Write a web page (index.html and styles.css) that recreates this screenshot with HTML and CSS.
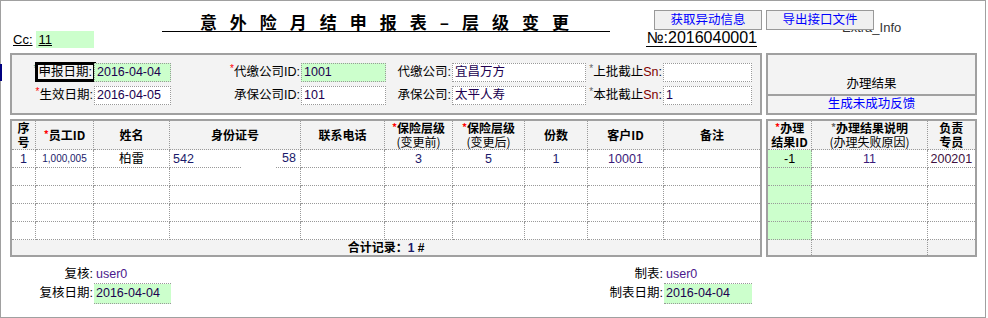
FILE: index.html
```html
<!DOCTYPE html>
<html lang="zh-CN">
<head>
    <meta charset="UTF-8">
    <title>意外险月结申报表 - 层级变更</title>
    <link rel="stylesheet" href="styles.css">
</head>
<body>
<div class="page">
    <div class="head">
        <div class="title">意外险月结申报表–层级变更</div>
        <div class="actions">
            <button class="btn">获取异动信息</button>
            <button class="btn">导出接口文件</button>
            <span class="extra">Extra_Info</span>
        </div>
    </div>

    <div class="sub">
        <span class="cc">Cc:</span>
        <span class="cc-val">11</span>
        <span class="no">№:2016040001</span>
    </div>

    <div class="panels">
        <div class="form">
            <span class="lbl"><i class="req teal">*</i><span class="focus">申报日期:</span></span>
            <span class="inp green">2016-04-04</span>
            <span class="lbl"><i class="req">*</i>代缴公司ID:</span>
            <span class="inp green">1001</span>
            <span class="lbl">代缴公司:</span>
            <span class="inp">宜昌万方</span>
            <span class="lbl"><i class="req gray">*</i>上批截止<em>Sn</em>:</span>
            <span class="inp"></span>

            <span class="lbl"><i class="req">*</i>生效日期:</span>
            <span class="inp">2016-04-05</span>
            <span class="lbl">承保公司ID:</span>
            <span class="inp">101</span>
            <span class="lbl">承保公司:</span>
            <span class="inp">太平人寿</span>
            <span class="lbl"><i class="req gray">*</i>本批截止<em>Sn</em>:</span>
            <span class="inp">1</span>
        </div>
        <div class="result">
            <div class="result-top">办理结果</div>
            <div class="result-link">生成未成功反馈</div>
        </div>
    </div>

    <div class="tables">
        <table class="grid main">
            <colgroup>
                <col class="w24"><col class="w58"><col class="w76"><col class="w131"><col class="w84">
                <col class="w68"><col class="w72"><col class="w63"><col class="w76"><col class="w96">
            </colgroup>
            <thead>
            <tr>
                <th>序<br>号</th>
                <th><i class="req">*</i>员工ID</th>
                <th>姓名</th>
                <th>身份证号</th>
                <th>联系电话</th>
                <th><i class="req">*</i>保险层级<br><span class="thin">(变更前)</span></th>
                <th><i class="req">*</i>保险层级<br><span class="thin">(变更后)</span></th>
                <th>份数</th>
                <th>客户ID</th>
                <th>备注</th>
            </tr>
            </thead>
            <tbody>
            <tr>
                <td class="num">1</td>
                <td class="small">1,000,005</td>
                <td>柏雷</td>
                <td class="idno"><span class="id-l">542</span><span class="id-r">58</span><span class="mask"></span></td>
                <td></td>
                <td class="num">3</td>
                <td class="num">5</td>
                <td class="num">1</td>
                <td class="val">10001</td>
                <td></td>
            </tr>
            <tr><td></td><td></td><td></td><td></td><td></td><td></td><td></td><td></td><td></td><td></td></tr>
            <tr><td></td><td></td><td></td><td></td><td></td><td></td><td></td><td></td><td></td><td></td></tr>
            <tr><td></td><td></td><td></td><td></td><td></td><td></td><td></td><td></td><td></td><td></td></tr>
            <tr><td></td><td></td><td></td><td></td><td></td><td></td><td></td><td></td><td></td><td></td></tr>
            <tr class="total"><td colspan="10">合计记录：<span class="num">1</span> #</td></tr>
            </tbody>
        </table>

        <table class="grid side">
            <colgroup><col class="w44"><col class="w115"><col class="w47"></colgroup>
            <thead>
            <tr>
                <th><i class="req">*</i>办理<br>结果ID</th>
                <th><i class="req gray">*</i>办理结果说明<br><span class="thin">(办理失败原因)</span></th>
                <th>负责<br>专员</th>
            </tr>
            </thead>
            <tbody>
            <tr><td class="green">-1</td><td class="val">11</td><td class="code">200201</td></tr>
            <tr><td class="green"></td><td></td><td></td></tr>
            <tr><td class="green"></td><td></td><td></td></tr>
            <tr><td class="green"></td><td></td><td></td></tr>
            <tr><td class="green"></td><td></td><td></td></tr>
            <tr class="total"><td></td><td></td><td></td></tr>
            </tbody>
        </table>
    </div>

    <div class="foot">
        <span class="lbl">复核:</span>
        <span class="fval user">user0</span>
        <span class="lbl">制表:</span>
        <span class="fval user">user0</span>

        <span class="lbl">复核日期:</span>
        <span class="fval green">2016-04-04</span>
        <span class="lbl">制表日期:</span>
        <span class="fval green">2016-04-04</span>
    </div>
</div>
</body>
</html>
```

FILE: styles.css
```css
* { box-sizing: border-box; }
body { margin: 0; font-family: "Liberation Sans", "Noto Sans CJK SC", sans-serif; font-size: 12.5px; color: #000; background: #fff; }
.page { position: relative; width: 986px; height: 318px; border: 1px solid #a0a0a0; }
.page::before { content: ""; position: absolute; left: -1px; top: 63px; width: 2px; height: 17px; background: #000080; }

/* header */
.head { display: flex; height: 31px; }
.title { margin-left: 161px; width: 448px; height: 31px; border-bottom: 1px solid #000; padding: 12px 0 0 10px; text-align: center; font-family: "Noto Sans CJK SC", sans-serif; font-size: 17px; line-height: 17px; font-weight: bold; letter-spacing: 13px; white-space: nowrap; }
.actions { position: relative; display: flex; gap: 4px; margin-left: 44px; padding-top: 9px; }
.btn { position: relative; z-index: 1; width: 108px; height: 20px; padding: 0; border: 1px solid #999; background: #f0f0f0; color: #0000ff; font-family: inherit; font-size: 12.5px; line-height: 17px; }
.extra { position: absolute; left: 188px; top: 19px; font-size: 13px; line-height: 16px; color: #333; }

.sub { display: flex; width: 760px; height: 17px; margin-top: -1px; }
.cc { margin-left: 12px; font-size: 13px; line-height: 17px; text-decoration: underline; }
.cc-val { width: 58px; margin-left: 3px; padding-left: 3px; background: #ccffcc; font-size: 13px; line-height: 17px; text-decoration: underline; }
.no { align-self: flex-start; margin: -1px 4px 0 auto; border-bottom: 1px solid #000; font-size: 16px; line-height: 16px; }

/* top form */
.panels { display: flex; gap: 4px; margin: 5px 0 0 9px; }
.form { display: grid; grid-template-columns: 82px 77px 130px 85px 66px 134px 77px 89px; grid-template-rows: 19px 19px; row-gap: 4px; align-content: start; width: 752px; height: 62px; padding-top: 8px; border: 2px solid #a0a0a0; background: #f3f3f3; }
.lbl { padding-right: 1px; text-align: right; line-height: 19px; white-space: nowrap; }
.lbl em { font-style: normal; color: #800000; }
.inp { padding-left: 2px; border: 1px dotted #999; background: #fff; line-height: 17px; color: #200050; white-space: nowrap; }
.green { background: #ccffcc; }
.inp.green { background: #ccffcc; }
.req { font-style: normal; font-size: 10px; color: #ff0000; vertical-align: top; line-height: 12px; }
.req.teal { color: #2a9a9a; }
.req.gray { color: #666; }
.focus { outline: 3px solid #000; outline-offset: 0; padding: 0 1px; }

.result { display: flex; flex-direction: column; width: 211px; height: 62px; border: 2px solid #a0a0a0; background: #f3f3f3; text-align: center; }
.result-top { height: 41px; padding-bottom: 2px; border-bottom: 2px solid #a0a0a0; display: flex; align-items: flex-end; justify-content: center; line-height: 16px; }
.result-link { color: #0000ff; line-height: 17px; }

/* tables */
.tables { display: flex; gap: 4px; margin: 4px 0 0 9px; }
.grid { border: 2px solid #a0a0a0; border-collapse: separate; border-spacing: 0; table-layout: fixed; }
.grid.main { width: 752px; }
.grid.side { width: 211px; }
.w24 { width: 24px; } .w58 { width: 58px; } .w76 { width: 76px; } .w131 { width: 131px; } .w84 { width: 84px; }
.w68 { width: 68px; } .w72 { width: 72px; } .w63 { width: 63px; } .w96 { width: 96px; }
.w44 { width: 44px; } .w115 { width: 115px; } .w47 { width: 47px; }
.grid th, .grid td { padding: 0; border-right: 1px dotted #999; border-bottom: 1px dotted #999; text-align: center; white-space: nowrap; }
.grid th:last-child, .grid td:last-child { border-right: none; }
.grid thead tr { height: 29px; }
.grid th { background: #f3f3f3; font-family: "Noto Sans CJK SC", sans-serif; font-size: 12px; line-height: 14px; font-weight: bold; }
.grid th .thin { font-weight: normal; }
.grid tbody tr { height: 18px; }
.grid td { line-height: 16px; }
.grid td.green { background: #ccffcc; }
.grid tr.total { height: 15px; }
.grid tr.total td { border-bottom: none; background: #f3f3f3; font-weight: bold; font-size: 12px; line-height: 14px; }
.num { color: #1a1a6a; }
.val { color: #3a1a7a; }
.code { color: #401040; }
.small { font-size: 10px; color: #1a1a6a; }
.grid td.idno { position: relative; text-align: left; }
.id-l { padding-left: 3px; color: #1a1a6a; }
.id-r { position: absolute; right: 4px; top: 0; color: #1a1a6a; }
.mask { position: absolute; left: 72px; bottom: -1px; width: 33px; height: 2px; background: #fff; }

/* footer */
.foot { display: grid; grid-template-columns: 82px 77px 493px 88px; grid-template-rows: 19px 20px; margin: 8px 0 0 11px; }
.foot .lbl { line-height: 18px; }
.fval { padding-left: 2px; border-bottom: 1px dotted #999; line-height: 18px; color: #200050; }
.fval.user { color: #4b1a8c; }
```
